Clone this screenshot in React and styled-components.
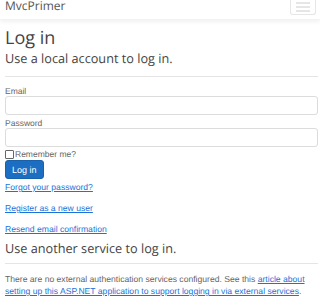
import React from 'react';
import styled, { createGlobalStyle } from 'styled-components';

const GlobalStyle = createGlobalStyle`
  html, body {
    margin: 0;
    padding: 0;
    background: #fff;
  }
  body {
    font-family: "Liberation Sans", Arial, sans-serif;
    color: #555;
    text-rendering: geometricPrecision;
  }
`;

const Navbar = styled.header`
  height: 19px;
  display: flex;
  justify-content: space-between;
  align-items: flex-start;
  padding: 0 4px 0 5px;
  box-shadow: 0 2px 4px rgba(0, 0, 0, 0.06);
  border-bottom: 1px solid #f3f3f3;
`;

const Brand = styled.span`
  font-family: "Open Sans", sans-serif;
  font-size: 12px;
  line-height: 12px;
  color: #555;
`;

const Toggler = styled.button`
  width: 26px;
  height: 15px;
  border: 1px solid #e6e6e6;
  border-top: none;
  border-radius: 0 0 3px 3px;
  background: #fff;
  padding: 0;
  display: flex;
  align-items: center;
  justify-content: center;
`;

const Main = styled.main`
  padding: 0 2px 0 5px;
`;

const Title = styled.h1`
  font-family: "Open Sans", sans-serif;
  font-weight: 400;
  font-size: 18px;
  line-height: 22px;
  color: #444;
  margin: 7px 0 0 0;
`;

const SubTitle = styled.h2`
  font-family: "Open Sans", sans-serif;
  font-weight: 400;
  font-size: 12.7px;
  line-height: 16px;
  color: #444;
  margin: ${({ $top }) => $top}px 0 0 0;
`;

const Rule = styled.hr`
  border: none;
  border-top: 1px solid #e5e5e5;
  margin: ${({ $top }) => $top}px 0 0 0;
`;

const Form = styled.form`
  display: flex;
  flex-direction: column;
  margin-top: 9px;
`;

const Label = styled.label`
  font-size: 8.5px;
  line-height: 10px;
  color: #666;
  margin-top: ${({ $top }) => $top || 0}px;
`;

const Input = styled.input`
  box-sizing: border-box;
  height: 19px;
  width: 313px;
  margin: 0;
  border: 1px solid #dcdcdc;
  border-radius: 3px;
  font-size: 9px;
`;

const CheckRow = styled.label`
  display: flex;
  align-items: center;
  gap: 1px;
  margin-top: 2px;
  font-size: 8.5px;
  line-height: 10px;
  color: #666;
`;

const Box = styled.span`
  width: 7px;
  height: 7px;
  border: 1px solid #666;
  border-radius: 1px;
`;

const Button = styled.button`
  align-self: flex-start;
  margin-top: 1px;
  height: 19px;
  padding: 0 6px;
  background: #1b6ec2;
  border: 1px solid #1861ac;
  border-radius: 3px;
  color: #fff;
  font-family: "Liberation Sans", Arial, sans-serif;
  font-size: 9px;
  text-rendering: geometricPrecision;
`;

const Links = styled.div`
  display: flex;
  flex-direction: column;
  align-items: flex-start;
  gap: 10px;
  margin-top: 3px;
`;

const Link = styled.a`
  font-size: 8.6px;
  line-height: 11px;
  color: #1a73d9;
  text-decoration: underline;
`;

const Info = styled.p`
  max-width: 306px;
  font-size: 8.6px;
  line-height: 12px;
  color: #666;
  margin: 9px 0 0 0;
`;

const InlineLink = styled.a`
  color: #1a73d9;
  text-decoration: underline;
`;

const MenuIcon = () => (
  <svg width="14" height="10" viewBox="0 0 14 10">
    <path d="M0 1h14M0 5h14M0 9h14" stroke="#ccc" strokeWidth="1" />
  </svg>
);

export default function App() {
  return (
    <>
      <GlobalStyle />
      <Navbar>
        <Brand>MvcPrimer</Brand>
        <Toggler>
          <MenuIcon />
        </Toggler>
      </Navbar>
      <Main>
        <Title>Log in</Title>
        <SubTitle $top={1}>Use a local account to log in.</SubTitle>
        <Rule $top={10} />
        <Form>
          <Label>Email</Label>
          <Input />
          <Label $top={3}>Password</Label>
          <Input />
          <CheckRow>
            <Box />
            Remember me?
          </CheckRow>
          <Button type="button">Log in</Button>
        </Form>
        <Links>
          <Link href="#">Forgot your password?</Link>
          <Link href="#">Register as a new user</Link>
          <Link href="#">Resend email confirmation</Link>
        </Links>
        <SubTitle $top={5}>Use another service to log in.</SubTitle>
        <Rule $top={7} />
        <Info>
          There are no external authentication services configured. See this{' '}
          <InlineLink href="#">
            article about setting up this ASP.NET application to support logging in via external services
          </InlineLink>
          .
        </Info>
      </Main>
    </>
  );
}
